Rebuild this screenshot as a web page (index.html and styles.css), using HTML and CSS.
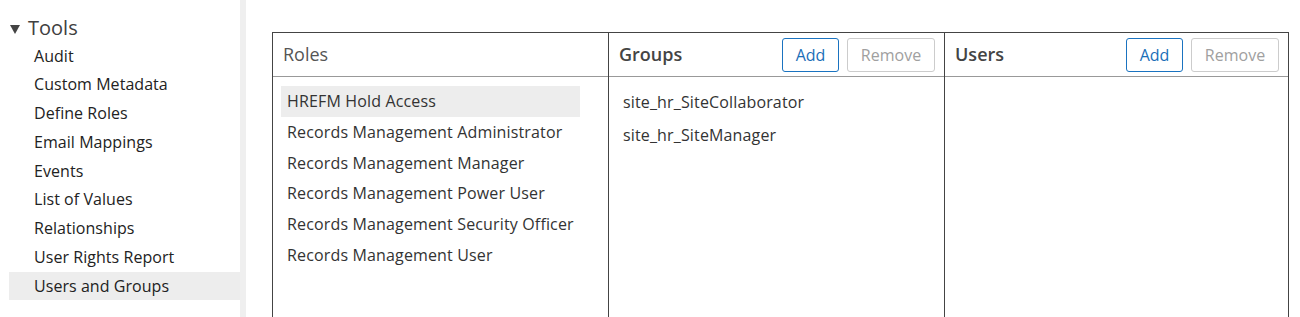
FILE: index.html
```html
<!DOCTYPE html>
<html>
<head>
<meta charset="utf-8">
<link rel="stylesheet" href="styles.css">
</head>
<body>
<div class="page">
  <nav class="sidebar">
    <div class="tools-head"><svg class="tri" width="10" height="9" viewBox="0 0 10 9"><path d="M0 0H10L5 9Z" fill="#444"/></svg>Tools</div>
    <ul class="nav-list">
      <li>Audit</li>
      <li>Custom Metadata</li>
      <li>Define Roles</li>
      <li>Email Mappings</li>
      <li>Events</li>
      <li>List of Values</li>
      <li>Relationships</li>
      <li>User Rights Report</li>
      <li class="active">Users and Groups</li>
    </ul>
  </nav>
  <div class="divider"></div>
  <main class="main">
    <div class="panel">
      <section class="col">
        <header class="col-head"><span class="title light">Roles</span></header>
        <ul class="roles">
          <li class="sel">HREFM Hold Access</li>
          <li>Records Management Administrator</li>
          <li>Records Management Manager</li>
          <li>Records Management Power User</li>
          <li>Records Management Security Officer</li>
          <li>Records Management User</li>
        </ul>
      </section>
      <section class="col">
        <header class="col-head"><span class="title">Groups</span>
          <div class="btns"><button class="btn add">Add</button><button class="btn rem">Remove</button></div>
        </header>
        <ul class="groups">
          <li>site_hr_SiteCollaborator</li>
          <li>site_hr_SiteManager</li>
        </ul>
      </section>
      <section class="col last">
        <header class="col-head"><span class="title">Users</span>
          <div class="btns"><button class="btn add">Add</button><button class="btn rem">Remove</button></div>
        </header>
      </section>
    </div>
  </main>
</div>
</body>
</html>
```

FILE: styles.css
```css
html, body { margin: 0; padding: 0; background: #fff; }
body { font-family: "Open Sans", "Noto Sans", sans-serif; color: #333; height: 317px; overflow: hidden; }
.page { display: flex; height: 317px; }
.sidebar { width: 240px; flex: none; padding-top: 15px; box-sizing: border-box; }
.tools-head { font-size: 20px; line-height: 26px; color: #404040; padding-left: 10px; display: flex; align-items: center; }
.tri { margin: 2px 8px 0 0; flex: none; }
.nav-list { list-style: none; margin: 0.5px 0 0 0; padding: 0 0 0 9px; }
.nav-list li { font-size: 16px; line-height: 28.75px; padding-left: 25px; color: #222; letter-spacing: 0.05px; }
.nav-list li.active { background: #ededed; }
.divider { width: 6px; flex: none; background: #efefef; }
.main { flex: 1; padding: 32px 11px 0 26px; }
.panel { display: grid; grid-template-columns: 336px 336px 1fr; border: 1px solid #444; border-bottom: none; height: 300px; box-sizing: border-box; }
.col { border-right: 1px solid #444; }
.col.last { border-right: none; }
.col-head { height: 43px; border-bottom: 1px solid #999; display: flex; align-items: center; justify-content: space-between; padding: 0 9px 0 10px; }
.title { font-size: 18px; font-weight: 600; color: #444; margin-bottom: 2px; }
.title.light { font-weight: 400; color: #555; }
.btns { display: flex; gap: 8px; }
.btn { font-family: inherit; font-size: 16px; height: 34px; background: #fff; border-radius: 3px; padding: 0 12px; cursor: pointer; }
.btn.add { border: 1px solid #1a73c0; color: #1a6fb8; width: 57px; }
.btn.rem { border: 1px solid #ccc; color: #a0a0a0; width: 88px; }
.roles { list-style: none; margin: 9px 0 0 8px; padding: 0; width: 299px; }
.roles li { font-size: 16px; line-height: 30.8px; padding-left: 6px; color: #333; letter-spacing: 0.15px; }
.roles li.sel { background: #ededed; }
.groups { list-style: none; margin: 9px 0 0 14px; padding: 0; }
.groups li { font-size: 16px; line-height: 33px; color: #333; letter-spacing: 0.15px; }
```
